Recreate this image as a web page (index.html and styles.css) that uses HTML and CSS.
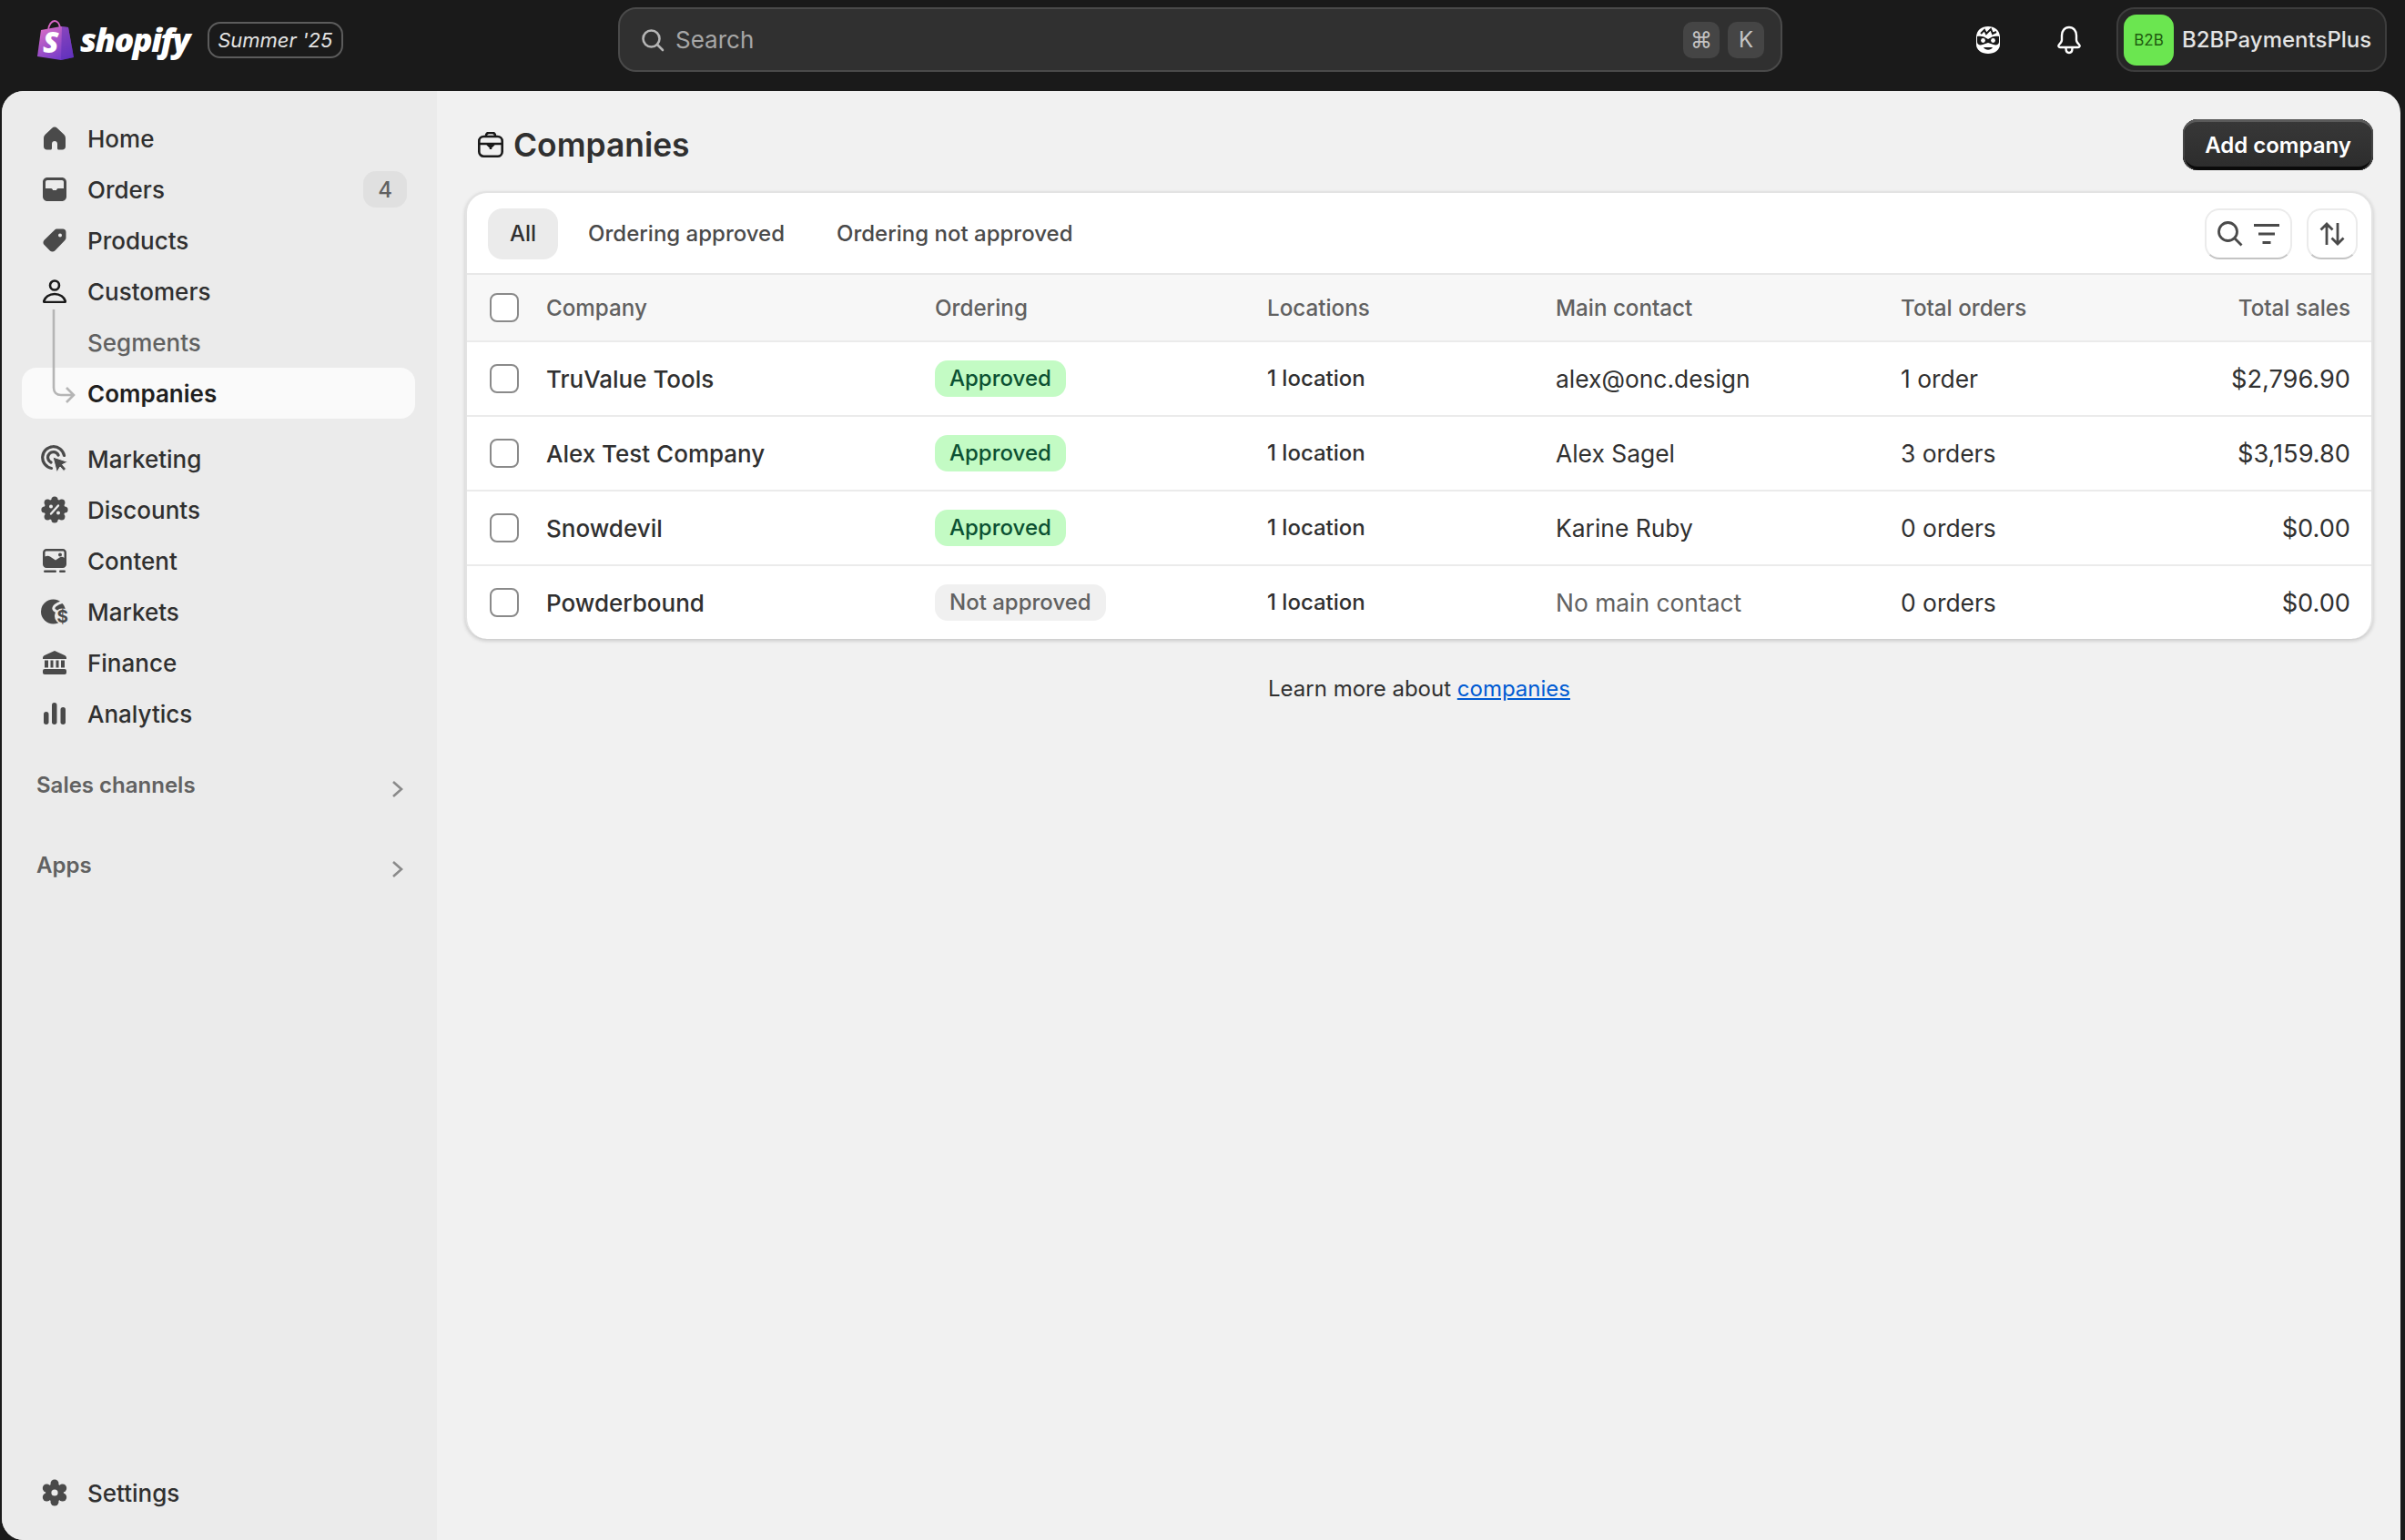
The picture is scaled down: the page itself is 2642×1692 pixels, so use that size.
FILE: index.html
```html
<!DOCTYPE html>
<html lang="en">
<head>
  <meta charset="UTF-8" />
  <title>Companies</title>
  <link rel="stylesheet" href="styles.css">
</head>
<body>
  <header class="topbar">
    <div class="brand">
      <svg class="bag" viewBox="0 0 40 44">
        <defs>
          <linearGradient id="bagFill" x1="0.2" y1="0" x2="0.8" y2="1">
            <stop offset="0" stop-color="#d66cc6" />
            <stop offset="1" stop-color="#6a35c9" />
          </linearGradient>
        </defs>
        <path d="M12 12C12 5 16 1 19 1s6 3 6 9" fill="none" stroke="#d866c4" stroke-width="1.8" />
        <path d="M4 11 26 7 34 8 40 41 26 44 0 40Z" fill="url(#bagFill)" />
        <path d="M27 7 34 8 40 41 26 44Z" fill="#5b2fb4" opacity="0.55" />
        <text x="6" y="36" class="bag-s">S</text>
      </svg>
      <span class="wordmark">shopify</span>
      <span class="edition">Summer '25</span>
    </div>
    <div class="search">
      <svg class="search-icon" viewBox="0 0 28 28"><circle cx="12.500" cy="12.500" r="9" /><path d="m19 19 6 6" /></svg>
      <span class="search-text">Search</span>
      <span class="key">⌘</span>
      <span class="key">K</span>
    </div>
    <div class="top-right">
      <svg class="top-icon" viewBox="0 0 30 32">
        <path d="M15 1C22 1 28 5 28 13v8c0 6-6 10-13 10S2 27 2 21v-8C2 5 8 1 15 1Z" fill="#fff" />
        <path d="M3 12c4-1 8 0 12 3 4-3 8-4 12-3v6c0 3-3 4-6 3l-6-2-6 2c-3 1-6 0-6-3Z" fill="#1a1a1a" />
        <path d="M7 9 11 5 13 9 18 4 20 9 24 7" fill="none" stroke="#1a1a1a" stroke-width="2" />
        <circle cx="9.500" cy="16.500" r="2.400" fill="#fff" /><circle cx="20.500" cy="16.500" r="2.400" fill="#fff" />
        <path d="M10 24c2 3.500 8 3.500 10 0Z" fill="#1a1a1a" />
      </svg>
      <svg class="top-icon bell" viewBox="0 0 28 32">
        <path d="M14 2c-5 0-8 4-8 9v5c0 2-1 3-3 5-1 1-1 3 1 3h20c2 0 2-2 1-3-2-2-3-3-3-5v-5c0-5-3-9-8-9Z" fill="none" stroke="#fff" stroke-width="2.400" stroke-linejoin="round" />
        <path d="M10.500 25c0 3 1.500 5 3.500 5s3.500-2 3.500-5" fill="none" stroke="#fff" stroke-width="2.400" />
      </svg>
      <div class="account">
        <span class="avatar">B2B</span>
        <span class="account-name">B2BPaymentsPlus</span>
      </div>
    </div>
  </header>

  <div class="frame">
    <nav class="sidebar">
      <div class="nav-group">
        <a class="nav-item">
          <svg class="nav-icon" viewBox="0 0 26 26"><path d="M13 0.500c1.100 0 2 .5 2.800 1.200L23 8.400c1.300 1.200 2 2.700 2 4.500V22c0 2-1.500 3.500-3.500 3.500h-4c-.9 0-1.500-.6-1.500-1.500v-5c0-1.700-1.300-3-3-3s-3 1.300-3 3v5c0 .9-.6 1.500-1.500 1.500h-4C2.500 25.500 1 24 1 22v-9.100c0-1.800.7-3.300 2-4.500l7.200-6.700C11 1 11.900.5 13 .5Z" /></svg>
          <span>Home</span>
        </a>
        <a class="nav-item">
          <svg class="nav-icon" viewBox="0 0 26 26"><path fill-rule="evenodd" d="M5 0h16c2.800 0 5 2.200 5 5v16c0 2.800-2.200 5-5 5H5c-2.800 0-5-2.200-5-5V5c0-2.800 2.200-5 5-5Zm0 3C3.800 3 3 3.800 3 5v7h6c.8 0 1.200.4 1.600 1l.6 1h3.600l.6-1c.4-.6.800-1 1.600-1h6V5c0-1.200-.8-2-2-2Z" /></svg>
          <span>Orders</span>
          <span class="count">4</span>
        </a>
        <a class="nav-item">
          <svg class="nav-icon" viewBox="0 0 26 26"><path fill-rule="evenodd" d="M16 .5h6c2 0 3.500 1.500 3.500 3.500v6c0 1.300-.5 2.400-1.400 3.300L13.300 24.400c-1.500 1.500-3.900 1.500-5.400 0l-6.300-6.300c-1.500-1.500-1.500-3.900 0-5.400L12.700 1.900C13.600 1 14.700.5 16 .5Zm3 5a2 2 0 1 0 0 4 2 2 0 0 0 0-4Z" /></svg>
          <span>Products</span>
        </a>
        <a class="nav-item">
          <svg class="nav-icon" viewBox="0 0 26 26"><circle cx="13" cy="6.500" r="5" fill="none" stroke="#1a1a1a" stroke-width="2.600" /><path d="M2 25c-.7 0-1-.5-.8-1.200C2.500 19.500 7 16 13 16s10.500 3.500 11.800 7.800c.2.700-.1 1.200-.8 1.200Z" fill="none" stroke="#1a1a1a" stroke-width="2.600" stroke-linejoin="round" /></svg>
          <span>Customers</span>
        </a>
        <div class="sub-list">
          <svg class="tree" viewBox="0 0 30 104"><path d="M3 0V86c0 5 3 8 8 8H25M17 86l8 8-8 8" fill="none" stroke="#b5b5b5" stroke-width="2.600" /></svg>
          <a class="nav-item nav-sub">
            <span class="nav-spacer"></span>
            <span>Segments</span>
          </a>
          <a class="nav-item nav-selected">
            <span class="nav-spacer"></span>
            <span>Companies</span>
          </a>
        </div>
      </div>

      <div class="nav-group second">
        <a class="nav-item">
          <svg class="nav-icon wide" viewBox="0 0 30 30"><path d="M25.500 11.500A12 12 0 1 0 11.500 25.500M19 11A6 6 0 1 0 11 19" fill="none" stroke="#4a4a4a" stroke-width="3.200" stroke-linecap="round" /><path d="M13 13 29.500 18.500 23.500 21.500 27.500 26 25 28.500 21 24 17.500 30Z" stroke="#ebebeb" stroke-width="1" /></svg>
          <span>Marketing</span>
        </a>
        <a class="nav-item">
          <svg class="nav-icon wide" viewBox="0 0 30 30">
            <circle cx="15" cy="15" r="11.500" />
            <circle cx="15" cy="4" r="3.600" /><circle cx="22.800" cy="7.200" r="3.600" /><circle cx="26" cy="15" r="3.600" /><circle cx="22.800" cy="22.800" r="3.600" />
            <circle cx="15" cy="26" r="3.600" /><circle cx="7.200" cy="22.800" r="3.600" /><circle cx="4" cy="15" r="3.600" /><circle cx="7.200" cy="7.200" r="3.600" />
            <circle cx="11" cy="11.500" r="2" fill="#ebebeb" /><circle cx="19" cy="18.500" r="2" fill="#ebebeb" />
            <path d="M19 10.500 11 19.500" stroke="#ebebeb" stroke-width="2.400" stroke-linecap="round" />
          </svg>
          <span>Discounts</span>
        </a>
        <a class="nav-item">
          <svg class="nav-icon" viewBox="0 0 26 26"><path fill-rule="evenodd" d="M4 0h18c2.200 0 4 1.800 4 4v13c0 2.200-1.800 4-4 4H4c-2.200 0-4-1.800-4-4V4c0-2.200 1.800-4 4-4Zm0 2.500C3 2.500 2.500 3 2.500 4v4.500c2-1 3.800-1 5.500 0l6 4 4.500-3c1.500-1 3.300-1 5 .5V4c0-1-.5-1.500-1.500-1.500Zm15 2a2 2 0 1 0 0 4 2 2 0 0 0 0-4Z" /><rect x="1" y="23.500" width="14" height="2.500" rx="1.200" /><rect x="18" y="23.500" width="7" height="2.500" rx="1.200" /></svg>
          <span>Content</span>
        </a>
        <a class="nav-item">
          <svg class="nav-icon wide" viewBox="0 0 30 30">
            <circle cx="13.500" cy="15" r="13.500" />
            <path d="M27 3C21 6 16 6 14 10.500 12.500 14 18 14 19.500 17" fill="none" stroke="#ebebeb" stroke-width="3" />
            <circle cx="23.500" cy="20" r="8.500" fill="#ebebeb" />
            <text x="17.500" y="26.500" class="dollar">$</text>
          </svg>
          <span>Markets</span>
        </a>
        <a class="nav-item">
          <svg class="nav-icon" viewBox="0 0 26 26"><path d="M13 0 24 5c1.200.6 2 1.600 2 3v1H0V8c0-1.400.8-2.400 2-3Z" /><rect x="0" y="20" width="26" height="6" rx="2" /><rect x="2" y="10.500" width="4" height="8" /><rect x="8.500" y="10.500" width="3" height="8" /><rect x="14.500" y="10.500" width="3" height="8" /><rect x="20" y="10.500" width="4" height="8" /></svg>
          <span>Finance</span>
        </a>
        <a class="nav-item">
          <svg class="nav-icon" viewBox="0 0 26 26"><rect x="1" y="11" width="5.500" height="14" rx="2.700" /><rect x="10" y="1" width="5.500" height="24" rx="2.700" /><rect x="19.500" y="6" width="5.500" height="19" rx="2.700" /></svg>
          <span>Analytics</span>
        </a>
      </div>

      <div class="nav-section first"><span>Sales channels</span><svg class="chev" viewBox="0 0 14 20"><path d="M2 2l9 8-9 8" /></svg></div>
      <div class="nav-section"><span>Apps</span><svg class="chev" viewBox="0 0 14 20"><path d="M2 2l9 8-9 8" /></svg></div>

      <a class="nav-item settings">
        <svg class="nav-icon wide" viewBox="0 0 30 30">
          <circle cx="15" cy="15" r="10" />
          <circle cx="15" cy="5" r="4.500" /><circle cx="23.700" cy="10" r="4.500" /><circle cx="23.700" cy="20" r="4.500" />
          <circle cx="15" cy="25" r="4.500" /><circle cx="6.300" cy="20" r="4.500" /><circle cx="6.300" cy="10" r="4.500" />
          <circle cx="15" cy="15" r="3.600" fill="#ebebeb" />
        </svg>
        <span>Settings</span>
      </a>
    </nav>

    <main class="main">
      <div class="page-head">
        <div class="page-title">
          <svg class="title-icon" viewBox="0 0 28 28"><path d="M9 5V4c0-1.800 1.500-3 3-3h4c1.500 0 3 1.200 3 3v1" fill="none" stroke="#1a1a1a" stroke-width="2.600" /><rect x="1.300" y="5" width="25.400" height="21.700" rx="5" fill="none" stroke="#1a1a1a" stroke-width="2.600" /><path d="M2 13h24M14 13v6M10 13l4 4 4-4" fill="none" stroke="#1a1a1a" stroke-width="2.600" /></svg>
          <h1>Companies</h1>
        </div>
        <button class="btn-primary">Add company</button>
      </div>

      <section class="card">
        <div class="tabs">
          <a class="tab active">All</a>
          <a class="tab">Ordering approved</a>
          <a class="tab">Ordering not approved</a>
          <div class="tab-actions">
            <button class="icon-btn filter">
              <svg viewBox="0 0 28 28" class="btn-svg"><circle cx="11.500" cy="11.500" r="10" /><path d="m19 19 7.500 7.500" /></svg>
              <svg viewBox="0 0 28 28" class="btn-svg"><path d="M0 4.500h28M5 14h18M9.500 23.500h9" /></svg>
            </button>
            <button class="icon-btn sort">
              <svg viewBox="0 0 28 28" class="btn-svg"><path d="M8 26V3M1.500 9.500 8 3l6.500 6.500M20 2v23M13.500 18.500 20 25l6.500-6.500" /></svg>
            </button>
          </div>
        </div>

        <div class="tr thead">
          <span class="check"></span>
          <span>Company</span>
          <span>Ordering</span>
          <span>Locations</span>
          <span>Main contact</span>
          <span>Total orders</span>
          <span class="num">Total sales</span>
        </div>

        <div class="tr">
          <span class="check"></span>
          <span class="name">TruValue Tools</span>
          <span><span class="badge ok">Approved</span></span>
          <span class="loc">1 location</span>
          <span>alex@onc.design</span>
          <span>1 order</span>
          <span class="num">$2,796.90</span>
        </div>
        <div class="tr">
          <span class="check"></span>
          <span class="name">Alex Test Company</span>
          <span><span class="badge ok">Approved</span></span>
          <span class="loc">1 location</span>
          <span>Alex Sagel</span>
          <span>3 orders</span>
          <span class="num">$3,159.80</span>
        </div>
        <div class="tr">
          <span class="check"></span>
          <span class="name">Snowdevil</span>
          <span><span class="badge ok">Approved</span></span>
          <span class="loc">1 location</span>
          <span>Karine Ruby</span>
          <span>0 orders</span>
          <span class="num">$0.00</span>
        </div>
        <div class="tr">
          <span class="check"></span>
          <span class="name">Powderbound</span>
          <span><span class="badge no">Not approved</span></span>
          <span class="loc">1 location</span>
          <span class="muted">No main contact</span>
          <span>0 orders</span>
          <span class="num">$0.00</span>
        </div>
      </section>

      <p class="learn">Learn more about <a class="link">companies</a></p>
    </main>
  </div>
</body>
</html>
```

FILE: styles.css
```css
html, body {
  margin: 0;
  padding: 0;
  height: 100%;
  background: #1a1a1a;
  color: #303030;
  font-family: Inter, "Noto Sans", sans-serif;
  overflow: hidden;
}
body {
  display: flex;
  flex-direction: column;
}

/* top bar */
.topbar {
  display: grid;
  grid-template-columns: 679px 1279px 1fr;
  align-items: center;
  height: 100px;
  box-sizing: border-box;
  padding-bottom: 13px;
  flex: none;
}
.brand {
  display: flex;
  align-items: center;
  padding-left: 41px;
}
.bag {
  width: 40px;
  height: 44px;
}
.bag-s {
  font-family: "Open Sans", sans-serif;
  font-weight: 800;
  font-size: 32px;
  font-style: italic;
  fill: #fff;
}
.wordmark {
  margin-left: 7px;
  color: #fff;
  font-family: "Open Sans", sans-serif;
  font-weight: 800;
  font-style: italic;
  font-size: 36px;
  letter-spacing: -1.500px;
  line-height: 44px;
}
.edition {
  display: flex;
  align-items: center;
  justify-content: center;
  width: 149px;
  height: 40px;
  box-sizing: border-box;
  margin-left: 20px;
  border: 2px solid #5c5c5c;
  border-radius: 14px;
  color: #e3e3e3;
  font-style: italic;
  font-size: 22px;
}
.search {
  display: flex;
  align-items: center;
  gap: 9px;
  height: 71px;
  box-sizing: border-box;
  padding: 0 18px 0 22px;
  background: #303030;
  border: 2px solid #4a4a4a;
  border-radius: 20px;
}
.search-icon {
  width: 28px;
  height: 28px;
  fill: none;
  stroke: #b5b5b5;
  stroke-width: 2.600;
  stroke-linecap: round;
}
.search-text {
  flex: 1;
  margin-left: 2px;
  color: #a6a6a6;
  font-size: 26px;
}
.key {
  display: flex;
  align-items: center;
  justify-content: center;
  width: 40px;
  height: 40px;
  background: #454545;
  border-radius: 10px;
  color: #c4c4c4;
  font-size: 24px;
}
.top-right {
  display: flex;
  align-items: center;
  justify-content: flex-end;
  padding-right: 20px;
}
.top-icon {
  width: 30px;
  height: 32px;
}
.bell {
  width: 28px;
  margin-left: 60px;
}
.account {
  display: flex;
  align-items: center;
  gap: 9px;
  width: 297px;
  height: 71px;
  box-sizing: border-box;
  margin-left: 38px;
  padding-left: 6px;
  background: #262626;
  border: 2px solid #3d3d3d;
  border-radius: 20px;
}
.avatar {
  display: flex;
  align-items: center;
  justify-content: center;
  width: 55px;
  height: 56px;
  background: #6be650;
  border-radius: 14px;
  color: #1f5c10;
  font-size: 17px;
}
.account-name {
  color: #e3e3e3;
  font-size: 24px;
  font-weight: 500;
}

/* frame under the bar */
.frame {
  flex: 1;
  display: flex;
  margin: 0 5px 0 2px;
  background: #f1f1f1;
  border-radius: 24px;
  border-bottom-right-radius: 0;
  overflow: hidden;
  min-height: 0;
}

/* sidebar */
.sidebar {
  display: flex;
  flex-direction: column;
  flex: none;
  width: 478px;
  box-sizing: border-box;
  padding: 24px 24px 24px 22px;
  background: #ebebeb;
}
.nav-item {
  display: flex;
  align-items: center;
  height: 56px;
  padding-right: 9px;
  color: #303030;
  font-size: 26px;
  font-weight: 500;
  border-radius: 16px;
}
.nav-icon {
  flex: none;
  width: 26px;
  height: 26px;
  margin: 0 23px 0 23px;
  fill: #4a4a4a;
}
.nav-icon.wide {
  width: 30px;
  height: 30px;
  margin: 0 21px 0 21px;
}
.nav-spacer {
  flex: none;
  width: 72px;
}
.count {
  display: flex;
  align-items: center;
  justify-content: center;
  width: 48px;
  height: 40px;
  margin-left: auto;
  background: #e0e0e0;
  border-radius: 14px;
  color: #616161;
  font-size: 24px;
}
.sub-list {
  position: relative;
}
.tree {
  position: absolute;
  left: 32px;
  top: -8px;
  width: 30px;
  height: 104px;
  z-index: 1;
}
.nav-sub {
  color: #616161;
}
.nav-selected {
  background: #fafafa;
  font-weight: 600;
  color: #1f1f1f;
}
.nav-group.second {
  margin-top: 16px;
}
.nav-section {
  display: flex;
  align-items: center;
  justify-content: space-between;
  height: 40px;
  margin-top: 48px;
  padding: 0 12px 0 16px;
  color: #616161;
  font-size: 24px;
  font-weight: 600;
}
.nav-section.first {
  margin-top: 30px;
}
.chev {
  width: 14px;
  height: 20px;
  margin-top: 10px;
  fill: none;
  stroke: #8a8a8a;
  stroke-width: 2.600;
}
.settings {
  margin-top: auto;
}

/* main column */
.main {
  flex: 1;
  min-width: 0;
  padding: 31px 30px 0 31px;
}
.page-head {
  display: flex;
  align-items: center;
  justify-content: space-between;
  height: 56px;
}
.page-title {
  display: flex;
  align-items: center;
  gap: 10px;
  padding-left: 14px;
}
.page-title h1 {
  margin: 0 0 0 1px;
  font-size: 35.400px;
  font-weight: 600;
  color: #303030;
}
.title-icon {
  width: 28px;
  height: 28px;
}
.btn-primary {
  width: 209px;
  height: 56px;
  padding: 0;
  background: linear-gradient(#383838, #2c2c2c);
  border: 0;
  border-radius: 16px;
  box-shadow: inset 0 3px 0 #5a5a5a, inset 2px 0 0 #444, inset -2px 0 0 #444, inset 0 -4px 0 #0a0a0a, inset 0 0 0 2px #0a0a0a;
  color: #fff;
  font-family: inherit;
  font-size: 24px;
  font-weight: 600;
}
.card {
  margin-top: 23px;
  background: #fff;
  border: 2px solid #e3e3e3;
  border-bottom: 0;
  border-radius: 24px;
  box-shadow: 0 2px 4px rgba(0, 0, 0, 0.18);
  overflow: hidden;
}
.tabs {
  display: flex;
  align-items: center;
  gap: 9px;
  height: 86px;
  padding: 2px 15px 0 23px;
  border-bottom: 2px solid #e8e8e8;
}
.tab {
  height: 56px;
  padding: 0 24px;
  border-radius: 16px;
  color: #4a4a4a;
  font-size: 24px;
  font-weight: 500;
  line-height: 56px;
}
.tab.active {
  background: #ebebeb;
  color: #303030;
}
.tab-actions {
  display: flex;
  gap: 16px;
  margin-left: auto;
}
.icon-btn {
  display: flex;
  align-items: center;
  justify-content: center;
  gap: 12px;
  height: 56px;
  padding: 0;
  background: #fff;
  border: 2px solid #ebebeb;
  border-bottom-color: #c4c4c4;
  border-radius: 16px;
}
.filter {
  width: 96px;
}
.sort {
  width: 56px;
}
.btn-svg {
  width: 28px;
  height: 28px;
  fill: none;
  stroke: #4a4a4a;
  stroke-width: 2.800;
}
.tr {
  display: grid;
  grid-template-columns: 62px 427px 365px 317px 379px 250px 1fr;
  align-items: center;
  height: 80px;
  padding: 0 23px 0 25px;
  border-bottom: 2px solid #ebebeb;
  font-size: 26.400px;
}
.tr:last-child {
  border-bottom: 0;
}
.check::before {
  content: "";
  display: block;
  width: 32px;
  height: 32px;
  box-sizing: border-box;
  background: #fff;
  border: 2px solid #8a8a8a;
  border-radius: 8px;
}
.tr > .num {
  font-size: 27.200px;
  text-align: right;
}
.thead {
  height: 72px;
  background: #f7f7f7;
  color: #616161;
  font-size: 24.200px;
  font-weight: 500;
}
.thead > .num {
  font-size: 24.200px;
}
.name {
  font-size: 26px;
  font-weight: 500;
}
.loc {
  padding-bottom: 2px;
  font-size: 24px;
  font-weight: 500;
}
.muted {
  color: #616161;
}
.badge {
  display: inline-block;
  height: 40px;
  padding: 0 16px;
  border-radius: 14px;
  font-size: 24px;
  font-weight: 500;
  line-height: 40px;
}
.ok {
  background: #c3fbc4;
  color: #0c5132;
}
.no {
  background: #f0f0f0;
  color: #616161;
}
.learn {
  margin: 40px 0 0;
  text-align: center;
  font-size: 24px;
  color: #303030;
}
.link {
  color: #005bd3;
  text-decoration: underline;
}
.dollar {
  font-size: 19px;
  font-weight: 700;
  fill: #4a4a4a;
}
```
